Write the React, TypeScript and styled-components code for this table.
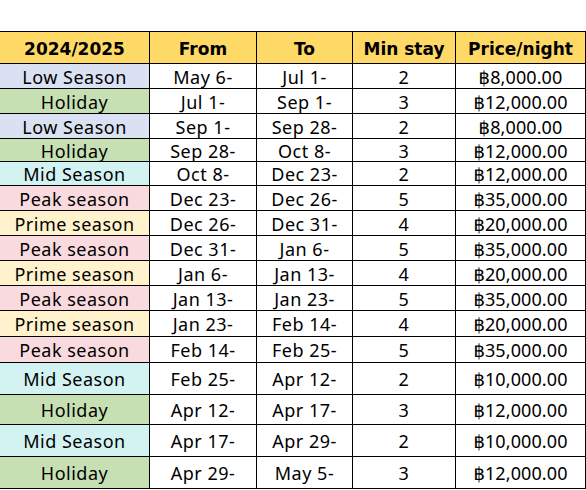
import React from "react";
import styled, { createGlobalStyle } from "styled-components";

const Global = createGlobalStyle`
  html, body { margin: 0; padding: 0; background: #fff; }
  body { font-family: "Noto Sans", "DejaVu Sans", sans-serif; overflow: hidden; }
`;

const Page = styled.div`
  width: 586px;
  height: 490px;
  padding-top: 31px;
  box-sizing: border-box;
  overflow: hidden;
`;

const Table = styled.div`
  margin-left: -1px;
  width: 587px;
  box-sizing: border-box;
  display: flex;
  flex-direction: column;
  gap: 1px;
  padding: 1px;
  background: #000;
`;

const Row = styled.div<{ $h: number }>`
  display: grid;
  grid-template-columns: 149px 106px 95px 102px 129px;
  gap: 1px;
  height: ${(p) => p.$h}px;
`;

const Cell = styled.div<{ $bg?: string; $tight?: boolean }>`
  background: ${(p) => p.$bg || "#fff"};
  color: #000;
  font-size: 18px;
  letter-spacing: ${(p) => (p.$tight ? "0.1px" : "0.5px")};
  display: flex;
  align-items: center;
  justify-content: center;
  white-space: nowrap;
  overflow: hidden;
  line-height: 1;
  padding-top: 1px;
`;

const HeadCell = styled(Cell)`
  background: #ffd966;
  font-family: "DejaVu Sans", "Noto Sans", sans-serif;
  font-weight: 700;
  font-size: 17px;
  letter-spacing: 0;
  padding-top: 3px;
`;

const seasonColors: Record<string, string> = {
  "Low Season": "#d9e1f2",
  Holiday: "#c6e0b4",
  "Mid Season": "#d3f3f3",
  "Peak season": "#f9dadf",
  "Prime season": "#fff2cc",
};

const rows: [string, string, string, string, string, number][] = [
  ["Low Season", "May 6-", "Jul 1-", "2", "฿8,000.00", 24],
  ["Holiday", "Jul 1-", "Sep 1-", "3", "฿12,000.00", 24],
  ["Low Season", "Sep 1-", "Sep 28-", "2", "฿8,000.00", 24],
  ["Holiday", "Sep 28-", "Oct 8-", "3", "฿12,000.00", 22],
  ["Mid Season", "Oct 8-", "Dec 23-", "2", "฿12,000.00", 23],
  ["Peak season", "Dec 23-", "Dec 26-", "5", "฿35,000.00", 24],
  ["Prime season", "Dec 26-", "Dec 31-", "4", "฿20,000.00", 24],
  ["Peak season", "Dec 31-", "Jan 6-", "5", "฿35,000.00", 24],
  ["Prime season", "Jan 6-", "Jan 13-", "4", "฿20,000.00", 24],
  ["Peak season", "Jan 13-", "Jan 23-", "5", "฿35,000.00", 24],
  ["Prime season", "Jan 23-", "Feb 14-", "4", "฿20,000.00", 25],
  ["Peak season", "Feb 14-", "Feb 25-", "5", "฿35,000.00", 25],
  ["Mid Season", "Feb 25-", "Apr 12-", "2", "฿10,000.00", 31],
  ["Holiday", "Apr 12-", "Apr 17-", "3", "฿12,000.00", 29],
  ["Mid Season", "Apr 17-", "Apr 29-", "2", "฿10,000.00", 31],
  ["Holiday", "Apr 29-", "May 5-", "3", "฿12,000.00", 31],
];

export default function App() {
  return (
    <Page>
      <Global />
      <Table>
        <Row $h={31}>
          <HeadCell>2024/2025</HeadCell>
          <HeadCell>From</HeadCell>
          <HeadCell>To</HeadCell>
          <HeadCell>Min stay</HeadCell>
          <HeadCell>Price/night</HeadCell>
        </Row>
        {rows.map(([season, from, to, min, price, h], i) => (
          <Row key={i} $h={h}>
            <Cell $bg={seasonColors[season]}>{season}</Cell>
            <Cell>{from}</Cell>
            <Cell>{to}</Cell>
            <Cell>{min}</Cell>
            <Cell $tight>{price}</Cell>
          </Row>
        ))}
      </Table>
    </Page>
  );
}
